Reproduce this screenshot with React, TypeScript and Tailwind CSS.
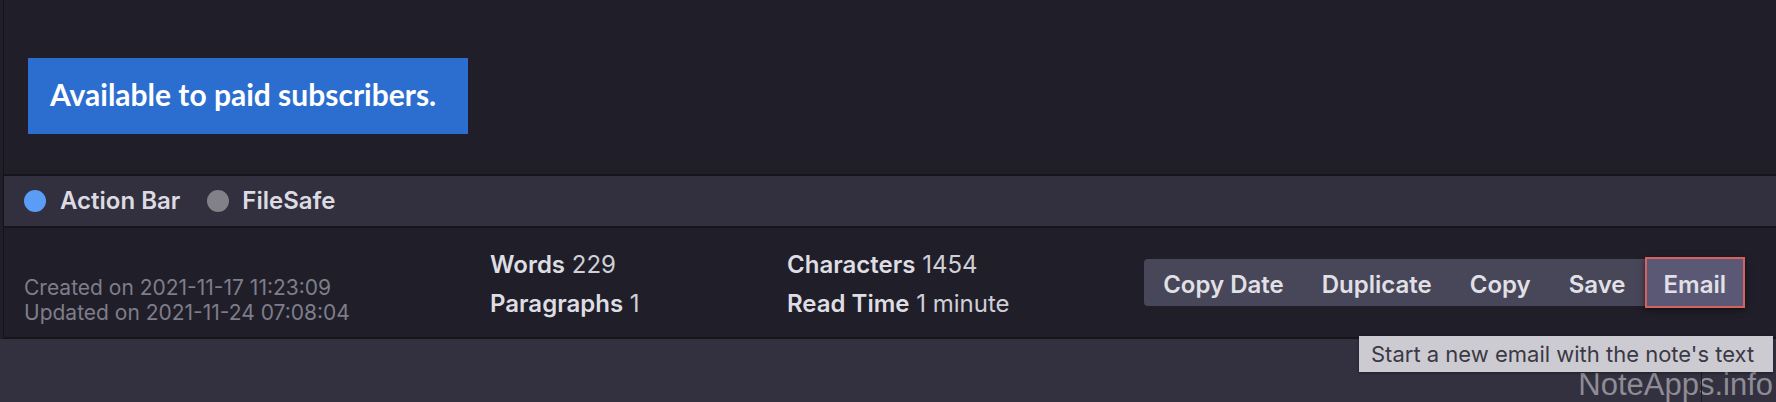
import React from "react";

const buttons = ["Copy Date", "Duplicate", "Copy", "Save"];

function Stat({ label, value }: { label: string; value: string }) {
  return (
    <div className="whitespace-nowrap">
      <span className="font-semibold text-[#dedde4]">{label}</span>{" "}
      <span className="text-[#d0cfd7]">{value}</span>
    </div>
  );
}

export default function App() {
  return (
    <div className="relative w-[1776px] h-[402px] overflow-hidden bg-[#33313f] font-['Inter',sans-serif]">
      <div className="bg-[#201f29] pl-[3px]">
        <div className="border-l border-[#15141b]">
          {/* editor area */}
          <div className="h-[174px] pt-[58px] pl-[24px]">
            <div className="flex items-center w-[440px] h-[76px] px-[22px] pb-[3px] bg-[#2c6ecf]">
              <span className="font-['Lato',sans-serif] font-bold text-[30px] text-white">
                Available to paid subscribers.
              </span>
            </div>
          </div>

          {/* action bar */}
          <div className="flex items-center h-[54px] pl-[20px] bg-[#32303f] border-y-2 border-[#16151c] text-[24px] font-semibold text-[#dcdbe2]">
            <span className="w-[22px] h-[22px] rounded-full bg-[#5b9cf7]" />
            <span className="ml-[14px]">Action Bar</span>
            <span className="ml-[27px] w-[22px] h-[22px] rounded-full bg-[#828188]" />
            <span className="ml-[13px]">FileSafe</span>
          </div>

          {/* info row */}
          <div className="flex items-center h-[111px] pl-[20px] pr-[31px] border-b-2 border-[#16151c]">
            <div className="w-[466px] pt-[34px] text-[21px] leading-[25px] text-[#7f7d89]">
              <div>Created on 2021-11-17 11:23:09</div>
              <div>Updated on 2021-11-24 07:08:04</div>
            </div>
            <div className="w-[297px] pt-[3px] text-[24px] leading-[39px]">
              <Stat label="Words" value="229" />
              <Stat label="Paragraphs" value="1" />
            </div>
            <div className="pt-[3px] text-[24px] leading-[39px]">
              <Stat label="Characters" value="1454" />
              <Stat label="Read Time" value="1 minute" />
            </div>
            <div className="ml-auto flex items-stretch h-[47px] rounded-[4px] bg-[#484659] text-[24px] font-semibold text-[#e1e0e7]">
              {buttons.map((b) => (
                <div key={b} className="flex items-center px-[19px] pt-[4px]">
                  {b}
                </div>
              ))}
              <div className="flex items-center -my-[2px] px-[17px] pt-[4px] border-2 border-[#d5625f] bg-[#5b5876] shadow-[0_2px_6px_rgba(0,0,0,0.5)]">
                Email
              </div>
            </div>
          </div>
        </div>
      </div>

      <div className="absolute right-[3px] bottom-[-6px] text-[31px] font-['Liberation_Sans',sans-serif] text-[#8e8c95]">
        NoteApps.info
      </div>
      <div className="absolute left-[1701px] top-[372px] w-[1px] h-[30px] bg-[#1c1b24]" />

      <div className="absolute left-[1359px] top-[336px] w-[414px] h-[36px] flex items-center px-[12px] bg-[#cdcbd2] text-[22px] text-[#3a3944] shadow-[0_1px_3px_rgba(0,0,0,0.4)]">
        Start a new email with the note&apos;s text
      </div>
    </div>
  );
}
